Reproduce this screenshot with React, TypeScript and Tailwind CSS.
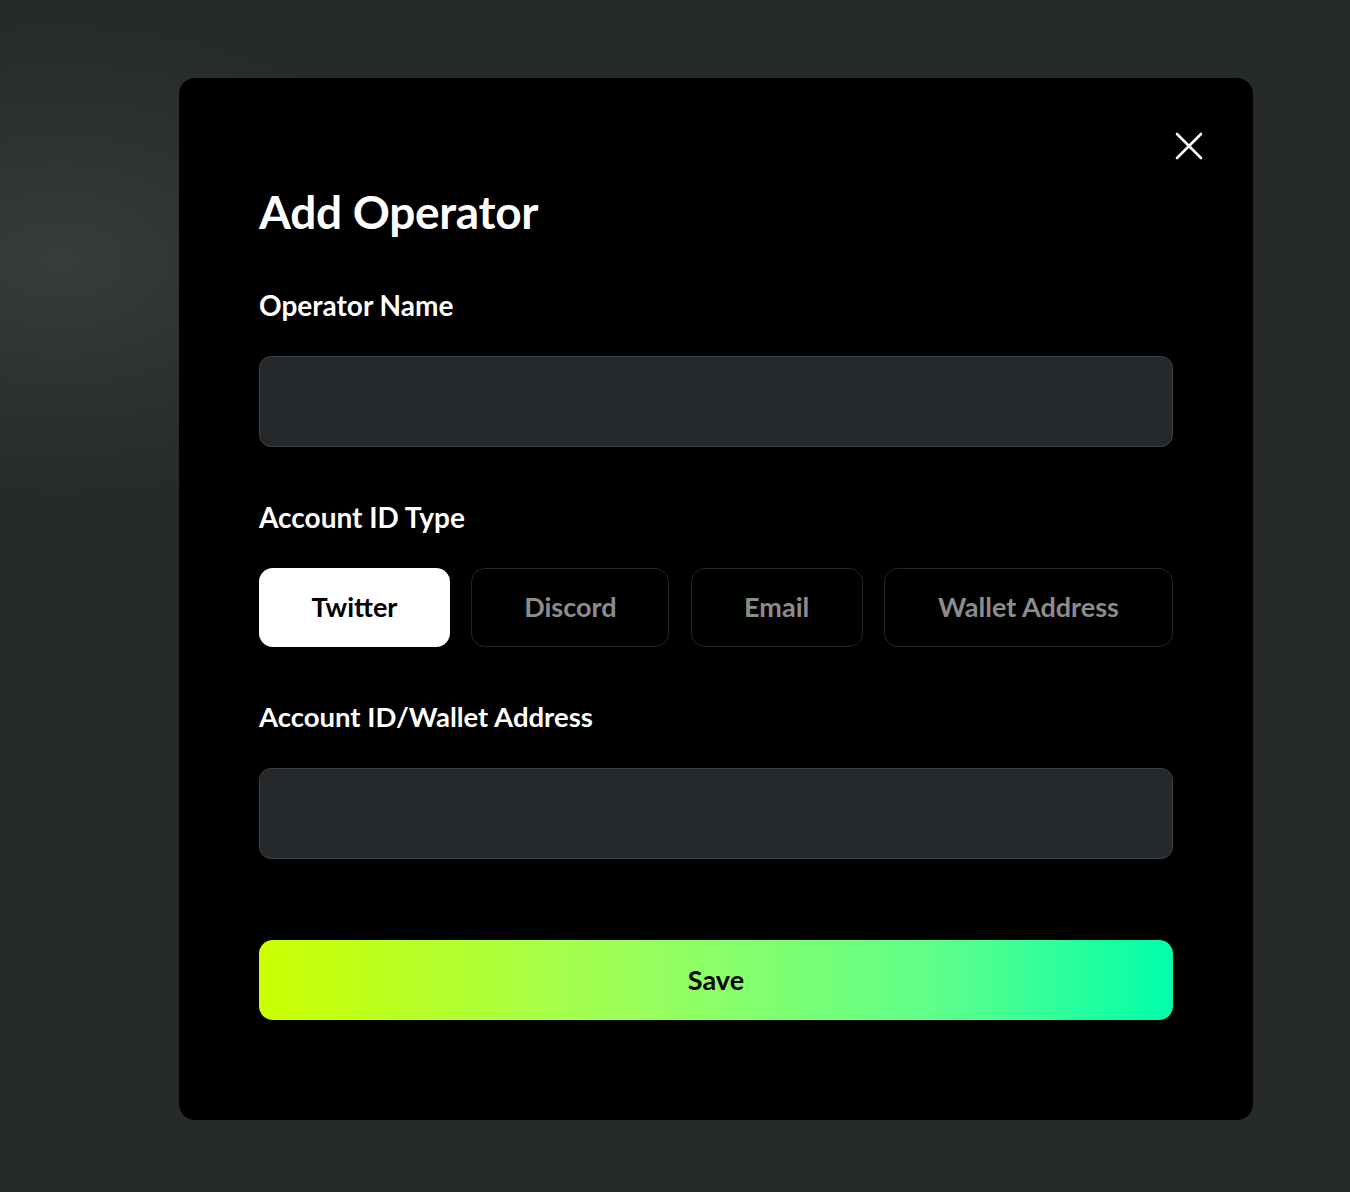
import { useState } from "react"

const TYPES = [
  { label: "Twitter", width: "w-[191px]" },
  { label: "Discord", width: "w-[198px]" },
  { label: "Email", width: "w-[172px]" },
  { label: "Wallet Address", width: "w-[289px]" },
]

export default function App() {
  const [type, setType] = useState("Twitter")

  return (
    <div className="min-h-[1192px] w-full bg-[#262a2b] bg-[radial-gradient(ellipse_380px_240px_at_60px_260px,#373c3c_0%,#2d3132_55%,transparent_100%)] pl-[179px] pt-[78px] font-['Lato',sans-serif]">
      {/* Modal */}
      <div className="relative flex h-[1042px] w-[1074px] flex-col rounded-2xl bg-black px-[80px] pt-[110px]">
        <button className="absolute right-[50px] top-[54px] text-white" aria-label="Close">
          <svg width="28" height="28" viewBox="0 0 28 28" fill="none">
            <path d="M2 2L26 26M26 2L2 26" stroke="currentColor" strokeWidth="2.6" strokeLinecap="round" />
          </svg>
        </button>

        <h1 className="text-[46px] font-bold leading-[48px] tracking-[-0.3px] text-white">Add Operator</h1>

        <label className="mt-[53px] text-[28px] font-bold leading-[32px] text-white">Operator Name</label>
        <input className="mt-[35px] h-[91px] w-full rounded-xl border-[1.5px] border-[#3d4143] bg-[#25292b] px-6 text-2xl text-white outline-none" />

        <label className="mt-[54px] text-[28px] font-bold leading-[32px] text-white">Account ID Type</label>
        <div className="mt-[35px] flex h-[79px] justify-between">
          {TYPES.map((t) => (
            <button
              key={t.label}
              onClick={() => setType(t.label)}
              className={`${t.width} flex h-full items-center justify-center rounded-[14px] text-[27px] font-bold ${
                type === t.label
                  ? "bg-white text-black"
                  : "border-[1.5px] border-[#262626] bg-black text-[#8c8c8c]"
              }`}
            >
              {t.label}
            </button>
          ))}
        </div>

        <label className="mt-[54px] text-[27.5px] font-bold leading-[32px] text-white">Account ID/Wallet Address</label>
        <input className="mt-[35px] h-[91px] w-full rounded-xl border-[1.5px] border-[#3d4143] bg-[#25292b] px-6 text-2xl text-white outline-none" />

        <button className="mt-[81px] h-[80px] w-full rounded-[14px] bg-[linear-gradient(90deg,#ccff00_0%,#9dff5a_40%,#5cff8c_75%,#00ffaa_100%)] text-[27px] font-bold text-black">
          Save
        </button>
      </div>
    </div>
  )
}
